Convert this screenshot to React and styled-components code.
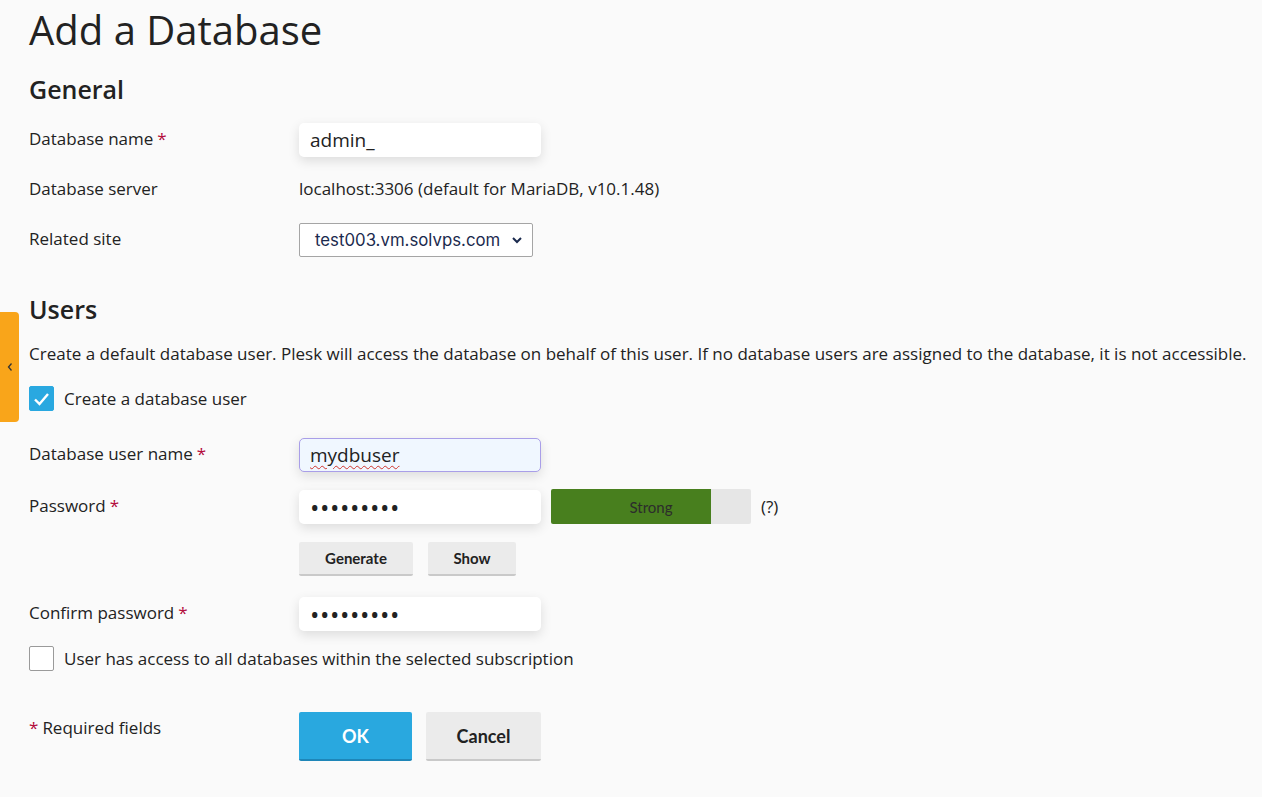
import React from 'react';
import styled, { createGlobalStyle } from 'styled-components';

const GlobalStyle = createGlobalStyle`
  html, body {
    margin: 0;
    padding: 0;
    background: #fafafa;
  }
  body {
    font-family: "Open Sans", "Noto Sans", sans-serif;
    color: #222;
  }
`;

const Page = styled.div`
  position: relative;
  min-height: 797px;
  padding: 0 0 0 29px;
  box-sizing: border-box;
`;

const SideTab = styled.div`
  position: absolute;
  left: 0;
  top: 312px;
  width: 19px;
  height: 110px;
  background: #f9a51a;
  border-radius: 0 4px 4px 0;
  display: flex;
  align-items: center;
  justify-content: center;
  color: #333;
`;

const Title = styled.h1`
  margin: 0;
  padding-top: 4px;
  font-size: 40px;
  font-weight: 400;
  line-height: 52px;
  color: #222;
`;

const SectionTitle = styled.h2`
  margin: ${p => p.$top}px 0 0;
  font-size: 25px;
  font-weight: 600;
  line-height: 32px;
  color: #222;
`;

const Row = styled.div`
  display: grid;
  grid-template-columns: 270px auto;
  align-items: ${p => p.$align || 'center'};
  min-height: ${p => p.$h || 34}px;
  margin-top: ${p => p.$top || 0}px;
  font-size: 17px;
`;

const Label = styled.div`
  font-size: 17px;
  line-height: 24px;
  margin-top: -2px;
`;

const Star = styled.span`
  color: #b3093b;
  margin-left: 4px;
`;

const Value = styled.div`
  font-size: 17px;
  line-height: 24px;
  margin-top: -2px;
`;

const TextInput = styled.input`
  width: 242px;
  height: 34px;
  box-sizing: border-box;
  border: none;
  border-radius: 5px;
  background: #fff;
  box-shadow: 0 4px 12px rgba(0, 0, 0, 0.12);
  padding: 0 11px;
  font-family: "Open Sans", "Noto Sans", sans-serif;
  font-size: ${p => (p.type === 'password' ? 25 : 19)}px;
  letter-spacing: ${p => (p.type === 'password' ? '0.6px' : 'normal')};
  color: #222;
  outline: none;
`;

const FocusBox = styled.div`
  width: 242px;
  height: 34px;
  box-sizing: border-box;
  border: 1px solid #a99ee8;
  border-radius: 5px;
  background: #f0f7ff;
  box-shadow: 0 4px 12px rgba(0, 0, 0, 0.12);
  padding: 0 10px;
  font-size: 19px;
  line-height: 32px;
  color: #222;
`;

const Misspelled = styled.span`
  text-decoration: underline wavy #d0342c;
  text-decoration-thickness: 1px;
  text-underline-offset: 3px;
`;

const Select = styled.div`
  width: 234px;
  height: 34px;
  box-sizing: border-box;
  border: 1px solid #a5a5a5;
  border-radius: 2px;
  background: #fff;
  display: flex;
  align-items: center;
  justify-content: space-between;
  padding: 0 9px 0 15px;
  font-family: Inter, "Noto Sans", sans-serif;
  font-size: 16.8px;
  color: #1b2a4e;
`;

const Description = styled.p`
  margin: 17px 0 0;
  font-size: 17px;
  line-height: 24px;
  white-space: nowrap;
`;

const CheckRow = styled.label`
  display: flex;
  align-items: center;
  gap: 10px;
  margin-top: ${p => p.$top}px;
  font-size: 17px;
  line-height: 24px;
`;

const Box = styled.span`
  width: 25px;
  height: 25px;
  box-sizing: border-box;
  border-radius: 2px;
  display: inline-flex;
  align-items: center;
  justify-content: center;
  background: ${p => (p.$on ? '#29a8e0' : '#fff')};
  border: 1px solid ${p => (p.$on ? '#29a8e0' : '#9a9a9a')};
`;

const FieldGroup = styled.div`
  display: flex;
  align-items: center;
  gap: 10px;
`;

const Strength = styled.div`
  width: 200px;
  height: 35px;
  border-radius: 2px;
  display: flex;
  align-items: center;
  justify-content: center;
  font-family: Lato, "Noto Sans", sans-serif;
  font-size: 15px;
  color: #2c2c2c;
`;

const Hint = styled.span`
  font-size: 17px;
`;

const Buttons = styled.div`
  display: flex;
  gap: ${p => p.$gap || 15}px;
`;

const Button = styled.button`
  width: ${p => p.$w}px;
  height: ${p => p.$h || 34}px;
  border: none;
  border-bottom: 2px solid ${p => (p.$primary ? '#1e86b8' : '#c9c9c9')};
  border-radius: 2px;
  background: ${p => (p.$primary ? '#29a8df' : '#ebebeb')};
  color: ${p => (p.$primary ? '#fff' : '#222')};
  font-family: Lato, "Noto Sans", sans-serif;
  font-weight: 700;
  font-size: ${p => p.$fs || 15}px;
  padding: 0;
  cursor: pointer;
`;

const Required = styled.div`
  font-size: 17px;
  line-height: 24px;
  padding-top: 4px;
  & > span {
    color: #b3093b;
    margin-right: 4px;
  }
`;

const strength = 80;

export default function App() {
  return (
    <>
      <GlobalStyle />
      <Page>
        <SideTab>
          <svg width="8" height="10" viewBox="0 0 8 10" fill="none">
            <path d="M5.5 1.5 L2.5 5 L5.5 8.5" stroke="#333" strokeWidth="1.3" />
          </svg>
        </SideTab>

        <Title>Add a Database</Title>

        <SectionTitle $top={17}>General</SectionTitle>

        <Row $top={18}>
          <Label>Database name<Star>*</Star></Label>
          <TextInput readOnly value="admin_" />
        </Row>
        <Row $top={16}>
          <Label>Database server</Label>
          <Value>localhost:3306 (default for MariaDB, v10.1.48)</Value>
        </Row>
        <Row $top={16}>
          <Label>Related site</Label>
          <Select>
            <span>test003.vm.solvps.com</span>
            <svg width="12" height="8" viewBox="0 0 12 8" fill="none">
              <path d="M2 2 L6 6 L10 2" stroke="#1b2a4e" strokeWidth="2" />
            </svg>
          </Select>
        </Row>

        <SectionTitle $top={36}>Users</SectionTitle>
        <Description>
          Create a default database user. Plesk will access the database on behalf of this user. If no database users are assigned to the database, it is not accessible.
        </Description>

        <CheckRow $top={20}>
          <Box $on>
            <svg width="17" height="14" viewBox="0 0 17 14" fill="none">
              <path d="M2 7.5 L6.5 12 L15 2" stroke="#fff" strokeWidth="2.4" />
            </svg>
          </Box>
          Create a database user
        </CheckRow>

        <Row $top={27}>
          <Label>Database user name<Star>*</Star></Label>
          <FocusBox><Misspelled>mydbuser</Misspelled></FocusBox>
        </Row>
        <Row $top={17}>
          <Label>Password<Star>*</Star></Label>
          <FieldGroup>
            <TextInput readOnly type="password" value="123456789" />
            <Strength
              style={{
                background: `linear-gradient(to right, #487f1e ${strength}%, #e6e6e6 ${strength}%)`,
              }}
            >
              Strong
            </Strength>
            <Hint>(?)</Hint>
          </FieldGroup>
        </Row>
        <Row $top={18}>
          <div />
          <Buttons>
            <Button $w={114}>Generate</Button>
            <Button $w={88}>Show</Button>
          </Buttons>
        </Row>
        <Row $top={21}>
          <Label>Confirm password<Star>*</Star></Label>
          <TextInput readOnly type="password" value="123456789" />
        </Row>

        <CheckRow $top={15}>
          <Box />
          User has access to all databases within the selected subscription
        </CheckRow>

        <Row $top={41} $align="start" $h={49}>
          <Required><span>*</span>Required fields</Required>
          <Buttons $gap={14}>
            <Button $primary $w={113} $h={49} $fs={18}>OK</Button>
            <Button $w={115} $h={49} $fs={18}>Cancel</Button>
          </Buttons>
        </Row>
      </Page>
    </>
  );
}
